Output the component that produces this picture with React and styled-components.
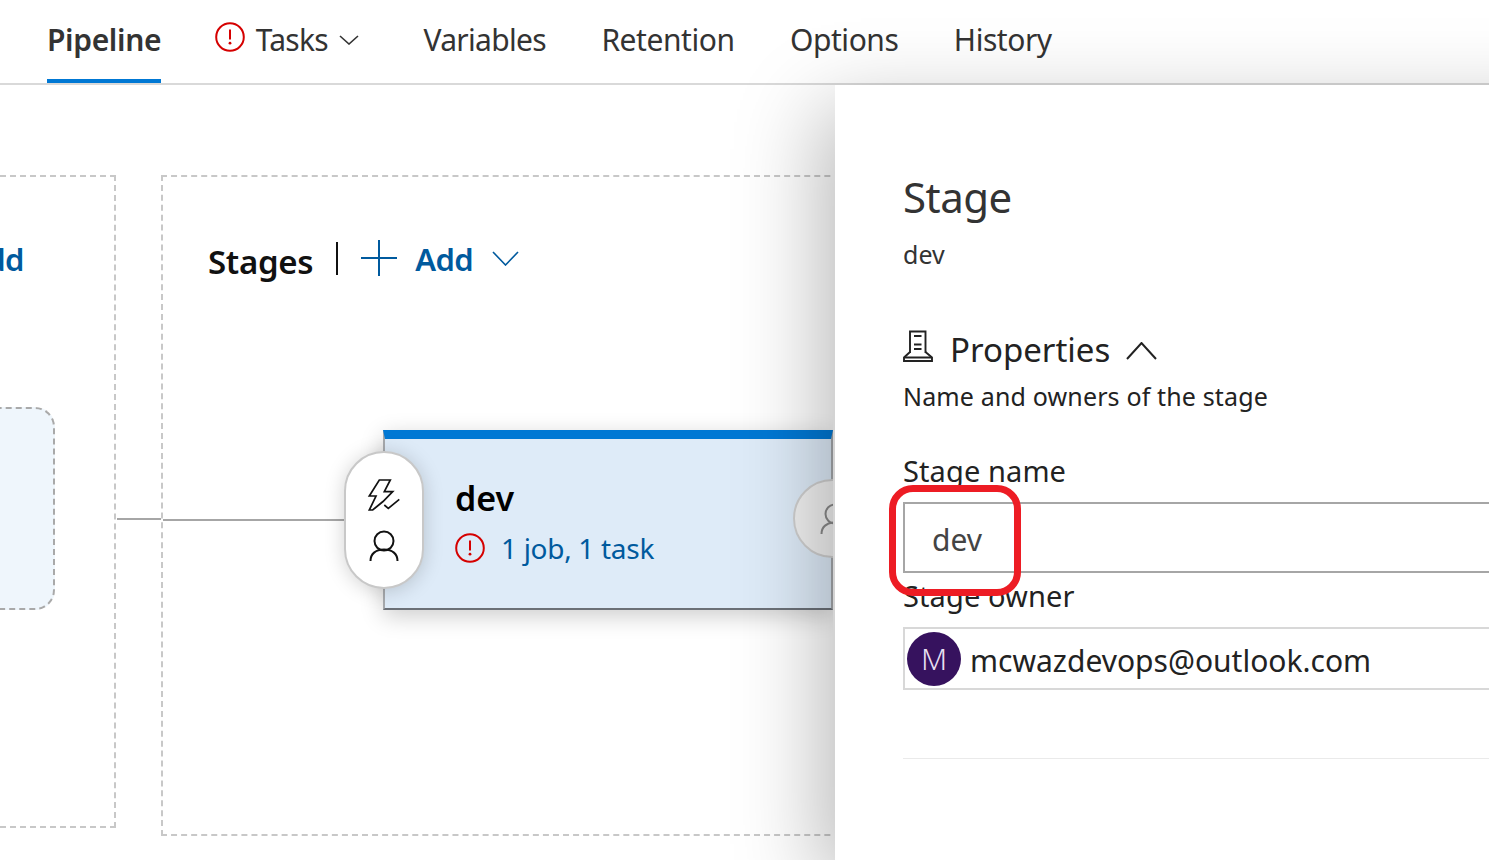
import React from "react";
import styled, { createGlobalStyle } from "styled-components";

const FONT = `"Noto Sans", "Open Sans", sans-serif`;
const BLUE = "#005a9e";

const GlobalStyle = createGlobalStyle`
  html, body {
    margin: 0;
    height: 100%;
    overflow: hidden;
    background: #fff;
    font-family: ${FONT};
  }
`;

const ErrorIcon = ({ size = 30 }) => (
  <svg width={size} height={size} viewBox="0 0 30 30" fill="none">
    <circle cx="15" cy="15" r="13.8" stroke="#d50000" strokeWidth="2" />
    <path d="M15 7.5v10" stroke="#d50000" strokeWidth="2" />
    <circle cx="15" cy="21.2" r="1.4" fill="#d50000" />
  </svg>
);

const Chevron = ({ w = 20, h = 10, up, color = "#333", weight = 1.6 }) => (
  <svg width={w} height={h} viewBox={`0 0 ${w} ${h}`} fill="none">
    <path
      d={up ? `M1 ${h - 1}L${w / 2} 1L${w - 1} ${h - 1}` : `M1 1L${w / 2} ${h - 1}L${w - 1} 1`}
      stroke={color}
      strokeWidth={weight}
    />
  </svg>
);

const PlusIcon = () => (
  <svg width="36" height="36" viewBox="0 0 36 36" fill="none">
    <path d="M18 0v36M0 18h36" stroke={BLUE} strokeWidth="2" />
  </svg>
);

const BoltIcon = () => (
  <svg width="34" height="34" viewBox="0 0 34 34" fill="none" stroke="#111" strokeWidth="1.7">
    <path d="M12.3 2h11l-6 11.7h8.4L16 23.5 5.7 32H2.3L9 18H2.3z" strokeLinejoin="miter" />
    <path d="M17.3 27l4 3.3 11-9" />
  </svg>
);

const PersonIcon = ({ color = "#111" }) => (
  <svg width="32" height="32" viewBox="0 0 32 32" fill="none" stroke={color} strokeWidth="2">
    <circle cx="16" cy="11" r="9.5" />
    <path d="M2.5 31c0-7 5-11.5 13.5-11.5S29.500 24 29.500 31" />
  </svg>
);

const PropertiesIcon = () => (
  <svg width="30" height="32" viewBox="0 0 30 32" fill="none" stroke="#222" strokeWidth="1.9">
    <path d="M7 23V1.500h15.500V23" />
    <path d="M7 22L1 27.500V31h28v-3.500L22.500 22" />
    <path d="M1 27.500h28M11 6h7.500M11 14.500h7.500M11 19h7.500" />
  </svg>
);

export default function App() {
  return (
    <Page>
      <GlobalStyle />
      <TabBar>
        <Tab active>Pipeline</Tab>
        <Tab tasks tight>
          <RaisedIcon>
            <ErrorIcon />
          </RaisedIcon>
          <TabLabel>Tasks</TabLabel>
          <Chevron />
        </Tab>
        <Tab tight>Variables</Tab>
        <Tab>Retention</Tab>
        <Tab>Options</Tab>
        <Tab>History</Tab>
      </TabBar>
      <Body>
        <Canvas>
          <ArtifactsBox>
            <ArtifactsAdd>Add</ArtifactsAdd>
            <ArtifactCard />
          </ArtifactsBox>
          <BoxLink />
          <StagesBox>
            <StagesHeader>
              <StagesTitle>Stages</StagesTitle>
              <Separator />
              <PlusIcon />
              <AddLabel>Add</AddLabel>
              <Chevron w={27} h={15} color={BLUE} />
            </StagesHeader>
            <NodeRow>
              <NodeLink />
              <ConditionPill>
                <BoltIcon />
                <PersonIcon />
              </ConditionPill>
              <StageCard>
                <StageName>dev</StageName>
                <StageTasks>
                  <ErrorIcon />
                  <span>1 job, 1 task</span>
                </StageTasks>
                <PostPill>
                  <PersonIcon color="#8a8a8a" />
                </PostPill>
              </StageCard>
            </NodeRow>
          </StagesBox>
        </Canvas>
        <Panel>
          <PanelTitle>Stage</PanelTitle>
          <PanelSubtitle>dev</PanelSubtitle>
          <SectionRow>
            <RaisedIcon>
              <PropertiesIcon />
            </RaisedIcon>
            <SectionTitle>Properties</SectionTitle>
            <LoweredIcon>
              <Chevron up w={31} h={18} color="#222" weight={2} />
            </LoweredIcon>
          </SectionRow>
          <SectionHint>Name and owners of the stage</SectionHint>
          <FieldLabel gap={40}>Stage name</FieldLabel>
          <NameInput>dev</NameInput>
          <FieldLabel gap={5}>Stage owner</FieldLabel>
          <OwnerBox>
            <Avatar>M</Avatar>
            <OwnerEmail>mcwazdevops@outlook.com</OwnerEmail>
          </OwnerBox>
          <Divider />
          <Annotation />
        </Panel>
      </Body>
    </Page>
  );
}

const Page = styled.div`
  display: flex;
  flex-direction: column;
  height: 100vh;
  overflow: hidden;
`;

const TabBar = styled.nav`
  flex: none;
  display: flex;
  height: 83px;
  gap: 55.5px;
  padding-left: 47px;
  border-bottom: 2px solid #d9d9d9;
  background: #fff;
`;

const Tab = styled.div`
  position: relative;
  display: flex;
  align-items: center;
  gap: 11px;
  height: 83px;
  box-sizing: border-box;
  padding-bottom: ${({ active }) => (active ? "0" : "4px")};
  font-size: 30px;
  letter-spacing: ${({ active, tight }) => (active ? "-0.35px" : tight ? "-0.7px" : "-0.45px")};
  font-weight: ${({ active }) => (active ? 600 : 400)};
  color: #333;
  border-bottom: ${({ active }) => (active ? "4px solid #0078d4" : "none")};
  margin: ${({ tasks }) => (tasks ? "0 9px 0 -2px" : "0")};
`;

const TabLabel = styled.span``;

const RaisedIcon = styled.span`
  display: flex;
  margin-bottom: 6px;
`;

const LoweredIcon = styled.span`
  display: flex;
  margin-top: 3px;
`;

const Body = styled.div`
  flex: 1;
  display: flex;
  min-height: 0;
`;

const Canvas = styled.main`
  flex: none;
  width: 833px;
  margin-right: 2px;
  padding-top: 90px;
  display: flex;
  align-items: flex-start;
  overflow: hidden;
`;

const ArtifactsBox = styled.section`
  flex: none;
  box-sizing: border-box;
  width: 316px;
  height: 653px;
  margin-left: -200px;
  padding: 60px 0 0 164px;
  border: 2px dashed #c8c8c8;
`;

const ArtifactsAdd = styled.div`
  font-size: 31px;
  line-height: 44px;
  font-weight: 600;
  color: ${BLUE};
  letter-spacing: -0.6px;
`;

const ArtifactCard = styled.div`
  box-sizing: border-box;
  width: 200px;
  height: 203px;
  margin: 126px 0 0 -111px;
  background: #eff6fc;
  border: 2px dashed #a9a9a9;
  border-radius: 20px;
`;

const BoxLink = styled.div`
  flex: none;
  width: 44px;
  height: 2px;
  margin: 343px 0 0 1px;
  background: #a6a6a6;
`;

const StagesBox = styled.section`
  flex: none;
  box-sizing: border-box;
  width: 800px;
  height: 661px;
  padding-top: 61px;
  border: 2px dashed #c8c8c8;
`;

const StagesHeader = styled.header`
  display: flex;
  align-items: center;
  height: 40px;
  padding-left: 45px;
`;

const StagesTitle = styled.h2`
  margin: 6px 0 0;
  font-size: 33px;
  font-weight: 600;
  color: #111;
  letter-spacing: -0.3px;
`;

const Separator = styled.div`
  width: 2px;
  height: 33px;
  margin: 0 23px;
  background: #111;
`;

const AddLabel = styled.span`
  margin: 2px 19px 0 18px;
  font-size: 31px;
  font-weight: 600;
  color: ${BLUE};
  letter-spacing: -0.6px;
`;

const NodeRow = styled.div`
  display: flex;
  align-items: center;
  margin-top: 152px;
`;

const NodeLink = styled.div`
  flex: none;
  width: 181px;
  height: 2px;
  background: #a6a6a6;
`;

const ConditionPill = styled.div`
  position: relative;
  z-index: 1;
  flex: none;
  box-sizing: border-box;
  width: 80px;
  height: 138px;
  margin: -1px -41px 0 0;
  display: flex;
  flex-direction: column;
  align-items: center;
  justify-content: center;
  gap: 18px;
  background: #fff;
  border: 2px solid #c8c8c8;
  border-radius: 40px;
  box-shadow: 0 2px 20px rgba(0, 0, 0, 0.18);
`;

const StageCard = styled.article`
  position: relative;
  flex: none;
  box-sizing: border-box;
  width: 450px;
  height: 180px;
  padding: 36px 0 0 71px;
  background: #deebf8;
  border: 2px solid #a6a9ad;
  border-top: 9px solid #0078d4;
  border-bottom-color: #6b7077;
  box-shadow: 0 6px 22px rgba(0, 0, 0, 0.2);
`;

const StageName = styled.div`
  margin-left: -1px;
  font-size: 34px;
  line-height: 46px;
  font-weight: 600;
  color: #000;
`;

const StageTasks = styled.div`
  display: flex;
  align-items: center;
  gap: 16px;
  margin: 8px 0 0 -1px;
  font-size: 28px;
  color: ${BLUE};
  letter-spacing: -0.3px;
`;

const PostPill = styled.div`
  position: absolute;
  top: 40px;
  right: -41px;
  box-sizing: border-box;
  width: 79px;
  height: 79px;
  padding-left: 24px;
  display: flex;
  align-items: center;
  background: #f1f1f1;
  border: 2px solid #d0d0d0;
  border-radius: 40px;
`;

const Panel = styled.aside`
  position: relative;
  z-index: 2;
  flex: none;
  box-sizing: border-box;
  width: 900px;
  padding: 87px 0 0 68px;
  background: #fff;
  box-shadow: -14px 24px 80px rgba(0, 0, 0, 0.28);
`;

const PanelTitle = styled.h1`
  margin: 0;
  font-size: 42px;
  line-height: 50px;
  font-weight: 400;
  color: #333;
  letter-spacing: -0.5px;
`;

const PanelSubtitle = styled.div`
  margin-top: 15px;
  font-size: 25px;
  line-height: 34px;
  color: #333;
`;

const SectionRow = styled.div`
  display: flex;
  align-items: center;
  height: 44px;
  margin-top: 56px;
`;

const SectionTitle = styled.h3`
  margin: 0 16px 0 17px;
  font-size: 33px;
  font-weight: 400;
  color: #222;
`;

const SectionHint = styled.div`
  margin-top: 8px;
  font-size: 25px;
  line-height: 34px;
  letter-spacing: 0.15px;
  color: #222;
`;

const FieldLabel = styled.label`
  display: block;
  margin-top: ${({ gap }) => gap}px;
  font-size: 29px;
  line-height: 36px;
  letter-spacing: 0.1px;
  color: #222;
`;

const NameInput = styled.div`
  box-sizing: border-box;
  width: 700px;
  height: 71px;
  margin-top: 13px;
  padding: 3px 0 0 27px;
  display: flex;
  align-items: center;
  font-size: 30px;
  color: #444;
  border: 2px solid #a6a6a6;
`;

const OwnerBox = styled.div`
  box-sizing: border-box;
  width: 700px;
  height: 63px;
  margin-top: 13px;
  padding-left: 2px;
  display: flex;
  align-items: center;
  gap: 9px;
  border: 2px solid #d8d8d8;
`;

const Avatar = styled.div`
  flex: none;
  width: 54px;
  height: 54px;
  display: flex;
  align-items: center;
  justify-content: center;
  border-radius: 50%;
  background: #36125e;
  color: #e6dff0;
  font-size: 30px;
  font-weight: 300;
`;

const OwnerEmail = styled.span`
  padding-top: 4px;
  font-size: 30px;
  color: #222;
`;

const Divider = styled.hr`
  width: 700px;
  height: 1px;
  margin: 68px 0 0;
  border: none;
  background: #eaeaea;
`;

const Annotation = styled.div`
  position: absolute;
  left: 54px;
  top: 400px;
  box-sizing: border-box;
  width: 132px;
  height: 111px;
  border: 7px solid #ed1c24;
  border-radius: 24px;
`;
